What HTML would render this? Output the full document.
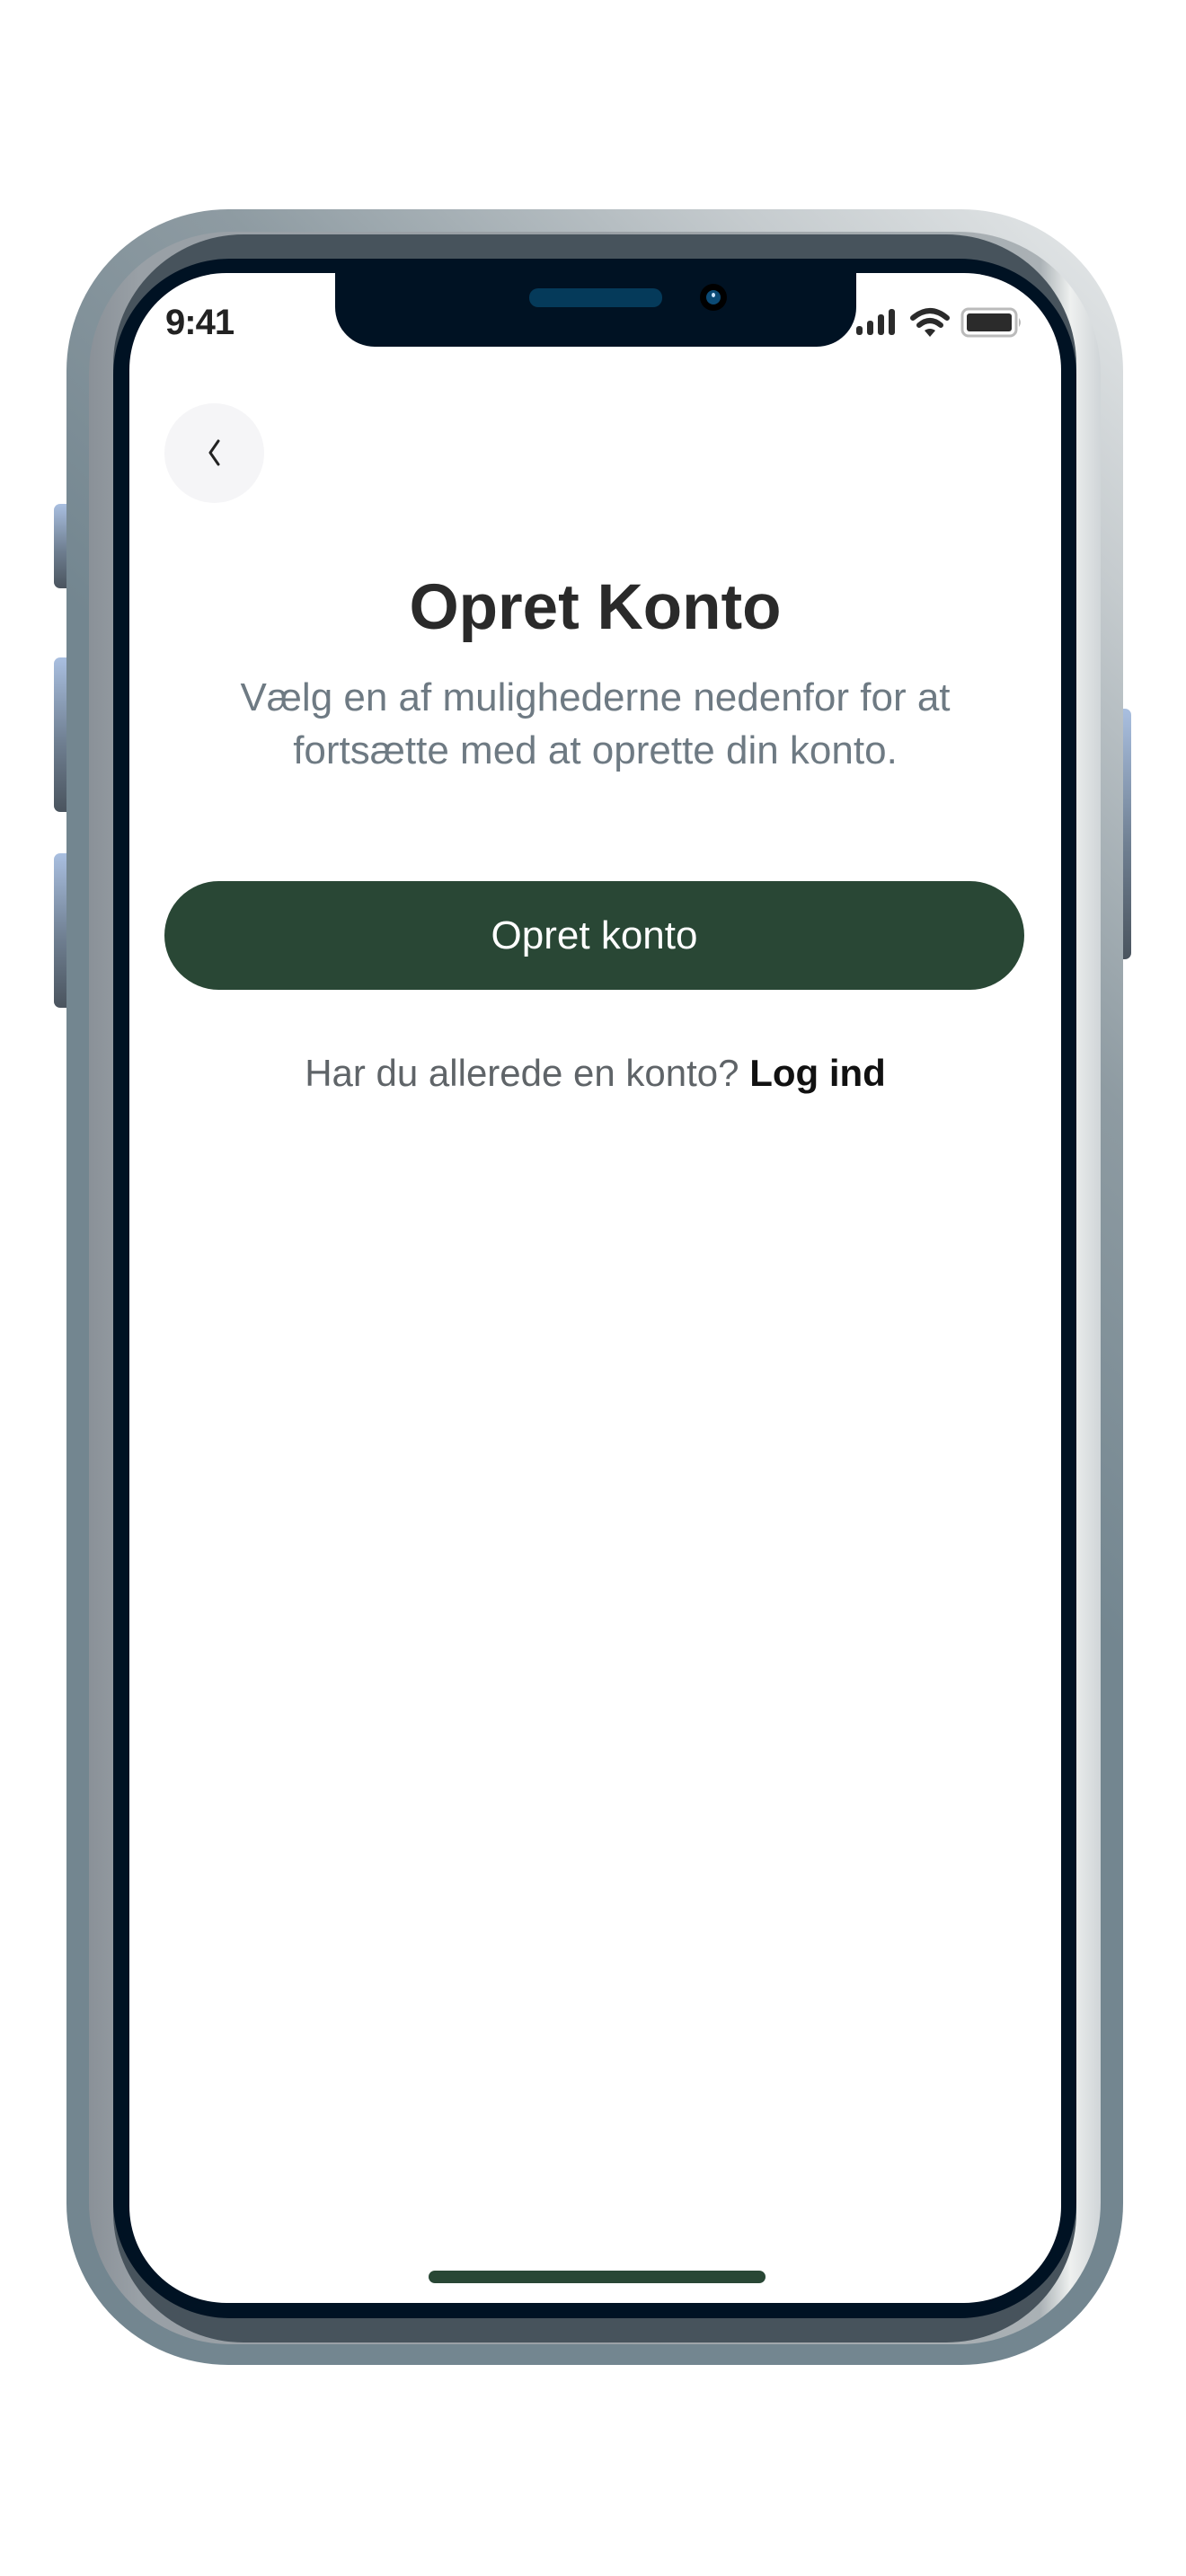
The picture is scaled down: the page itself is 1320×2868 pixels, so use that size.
<!DOCTYPE html>
<html><head><meta charset="utf-8"><style>
html,body{margin:0;padding:0;background:#fff;}
body{width:1320px;height:2868px;position:relative;overflow:hidden;font-family:"Liberation Sans",sans-serif;}
.a{position:absolute;}
.btn{background:linear-gradient(180deg,#a9bfe0,#6f7f91 55%,#4a545e);border-radius:6px;}
</style></head><body>
<!-- side buttons -->
<div class="a btn" style="left:60px;top:561px;width:20px;height:94px;border-radius:7px 0 0 7px"></div>
<div class="a btn" style="left:60px;top:732px;width:20px;height:172px;border-radius:7px 0 0 7px"></div>
<div class="a btn" style="left:60px;top:950px;width:20px;height:172px;border-radius:7px 0 0 7px"></div>
<div class="a btn" style="left:1240px;top:789px;width:19px;height:279px;border-radius:0 7px 7px 0"></div>
<!-- outer frame -->
<div class="a" style="left:74px;top:233px;width:1176px;height:2400px;border-radius:180px;background:linear-gradient(225deg,#e6e9ea 0%,#c5cbce 12%,#8e9ba2 28%,#738690 45%,#738690 100%)"></div>
<!-- band -->
<div class="a" style="left:99px;top:258px;width:1126px;height:2352px;border-radius:158px;background:linear-gradient(90deg,#8a9198 0%,#99a0a6 5%,#9aa0a5 50%,#aab1b5 94%,#eef0ef 97%,#d0d5d8 100%)"></div>
<div class="a" style="left:126px;top:261px;width:1072px;height:2347px;border-radius:145px;background:#47535c"></div>
<!-- black bezel -->
<div class="a" style="left:126px;top:288px;width:1072px;height:2293px;border-radius:130px;background:#001223"></div>
<!-- screen -->
<div class="a" style="left:144px;top:304px;width:1037px;height:2260px;border-radius:108px;background:#fff"></div>
<!-- notch -->
<div class="a" style="left:373px;top:296px;width:580px;height:90px;background:#001223;border-radius:0 0 44px 44px"></div>
<div class="a" style="left:589px;top:321px;width:148px;height:21px;border-radius:10px;background:#053a5a"></div>
<div class="a" style="left:779px;top:316px;width:30px;height:30px;border-radius:50%;background:#000"></div>
<div class="a" style="left:786px;top:323px;width:16px;height:16px;border-radius:50%;background:#0b4a75"></div>
<div class="a" style="left:792px;top:326px;width:4px;height:5px;border-radius:50%;background:#cfe6ff"></div>
<!-- status bar -->
<div class="a" style="left:184px;top:337px;font-size:40px;font-weight:bold;color:#222;letter-spacing:-1px">9:41</div>
<svg class="a" style="left:950px;top:340px" width="190" height="40" viewBox="0 0 190 40">
<rect x="3" y="23" width="7" height="10" rx="3" fill="#2b2b2b"/>
<rect x="15" y="17" width="7" height="16" rx="3" fill="#2b2b2b"/>
<rect x="27" y="10" width="7" height="23" rx="3" fill="#2b2b2b"/>
<rect x="39" y="4" width="7" height="29" rx="3" fill="#2b2b2b"/>
<path d="M66 14 Q85 -2 104 14" stroke="#2b2b2b" stroke-width="6" fill="none" stroke-linecap="round"/>
<path d="M73 22 Q85 12 97 22" stroke="#2b2b2b" stroke-width="6" fill="none" stroke-linecap="round"/>
<path d="M79 28 L85 35 L91 28 Q85 24 79 28Z" fill="#2b2b2b"/>
<rect x="121" y="4" width="60" height="30" rx="7" fill="none" stroke="#bbb" stroke-width="3"/>
<rect x="126" y="9" width="50" height="20" rx="3" fill="#2b2b2b"/>
<path d="M184 14 Q188 19 184 24Z" fill="#bbb"/>
</svg>
<!-- back -->
<div class="a" style="left:183px;top:449px;width:111px;height:111px;border-radius:50%;background:#f5f5f7"></div>
<svg class="a" style="left:224px;top:488px" width="30" height="32" viewBox="0 0 30 32"><path d="M19 3 L10 16 L19 29" stroke="#222" stroke-width="3" fill="none" stroke-linecap="round" stroke-linejoin="round"/></svg>
<!-- title -->
<div class="a" style="left:144px;width:1037px;top:633px;text-align:center;font-size:71px;font-weight:bold;color:#2a2a2a;line-height:88px">Opret Konto</div>
<div class="a" style="left:160px;width:1005px;top:747px;text-align:center;font-size:44px;color:#6e7a83;line-height:59px">Vælg en af mulighederne nedenfor for at<br>fortsætte med at oprette din konto.</div>
<!-- button -->
<div class="a" style="left:183px;top:981px;width:957px;height:121px;border-radius:61px;background:#294735;color:#fff;font-size:44px;text-align:center;line-height:121px">Opret konto</div>
<div class="a" style="left:144px;width:1037px;top:1170px;text-align:center;font-size:42px;color:#5f6468;line-height:50px">Har du allerede en konto? <b style="color:#111">Log ind</b></div>
<!-- home indicator -->
<div class="a" style="left:477px;top:2528px;width:375px;height:14px;border-radius:7px;background:#294735"></div>
</body></html>
